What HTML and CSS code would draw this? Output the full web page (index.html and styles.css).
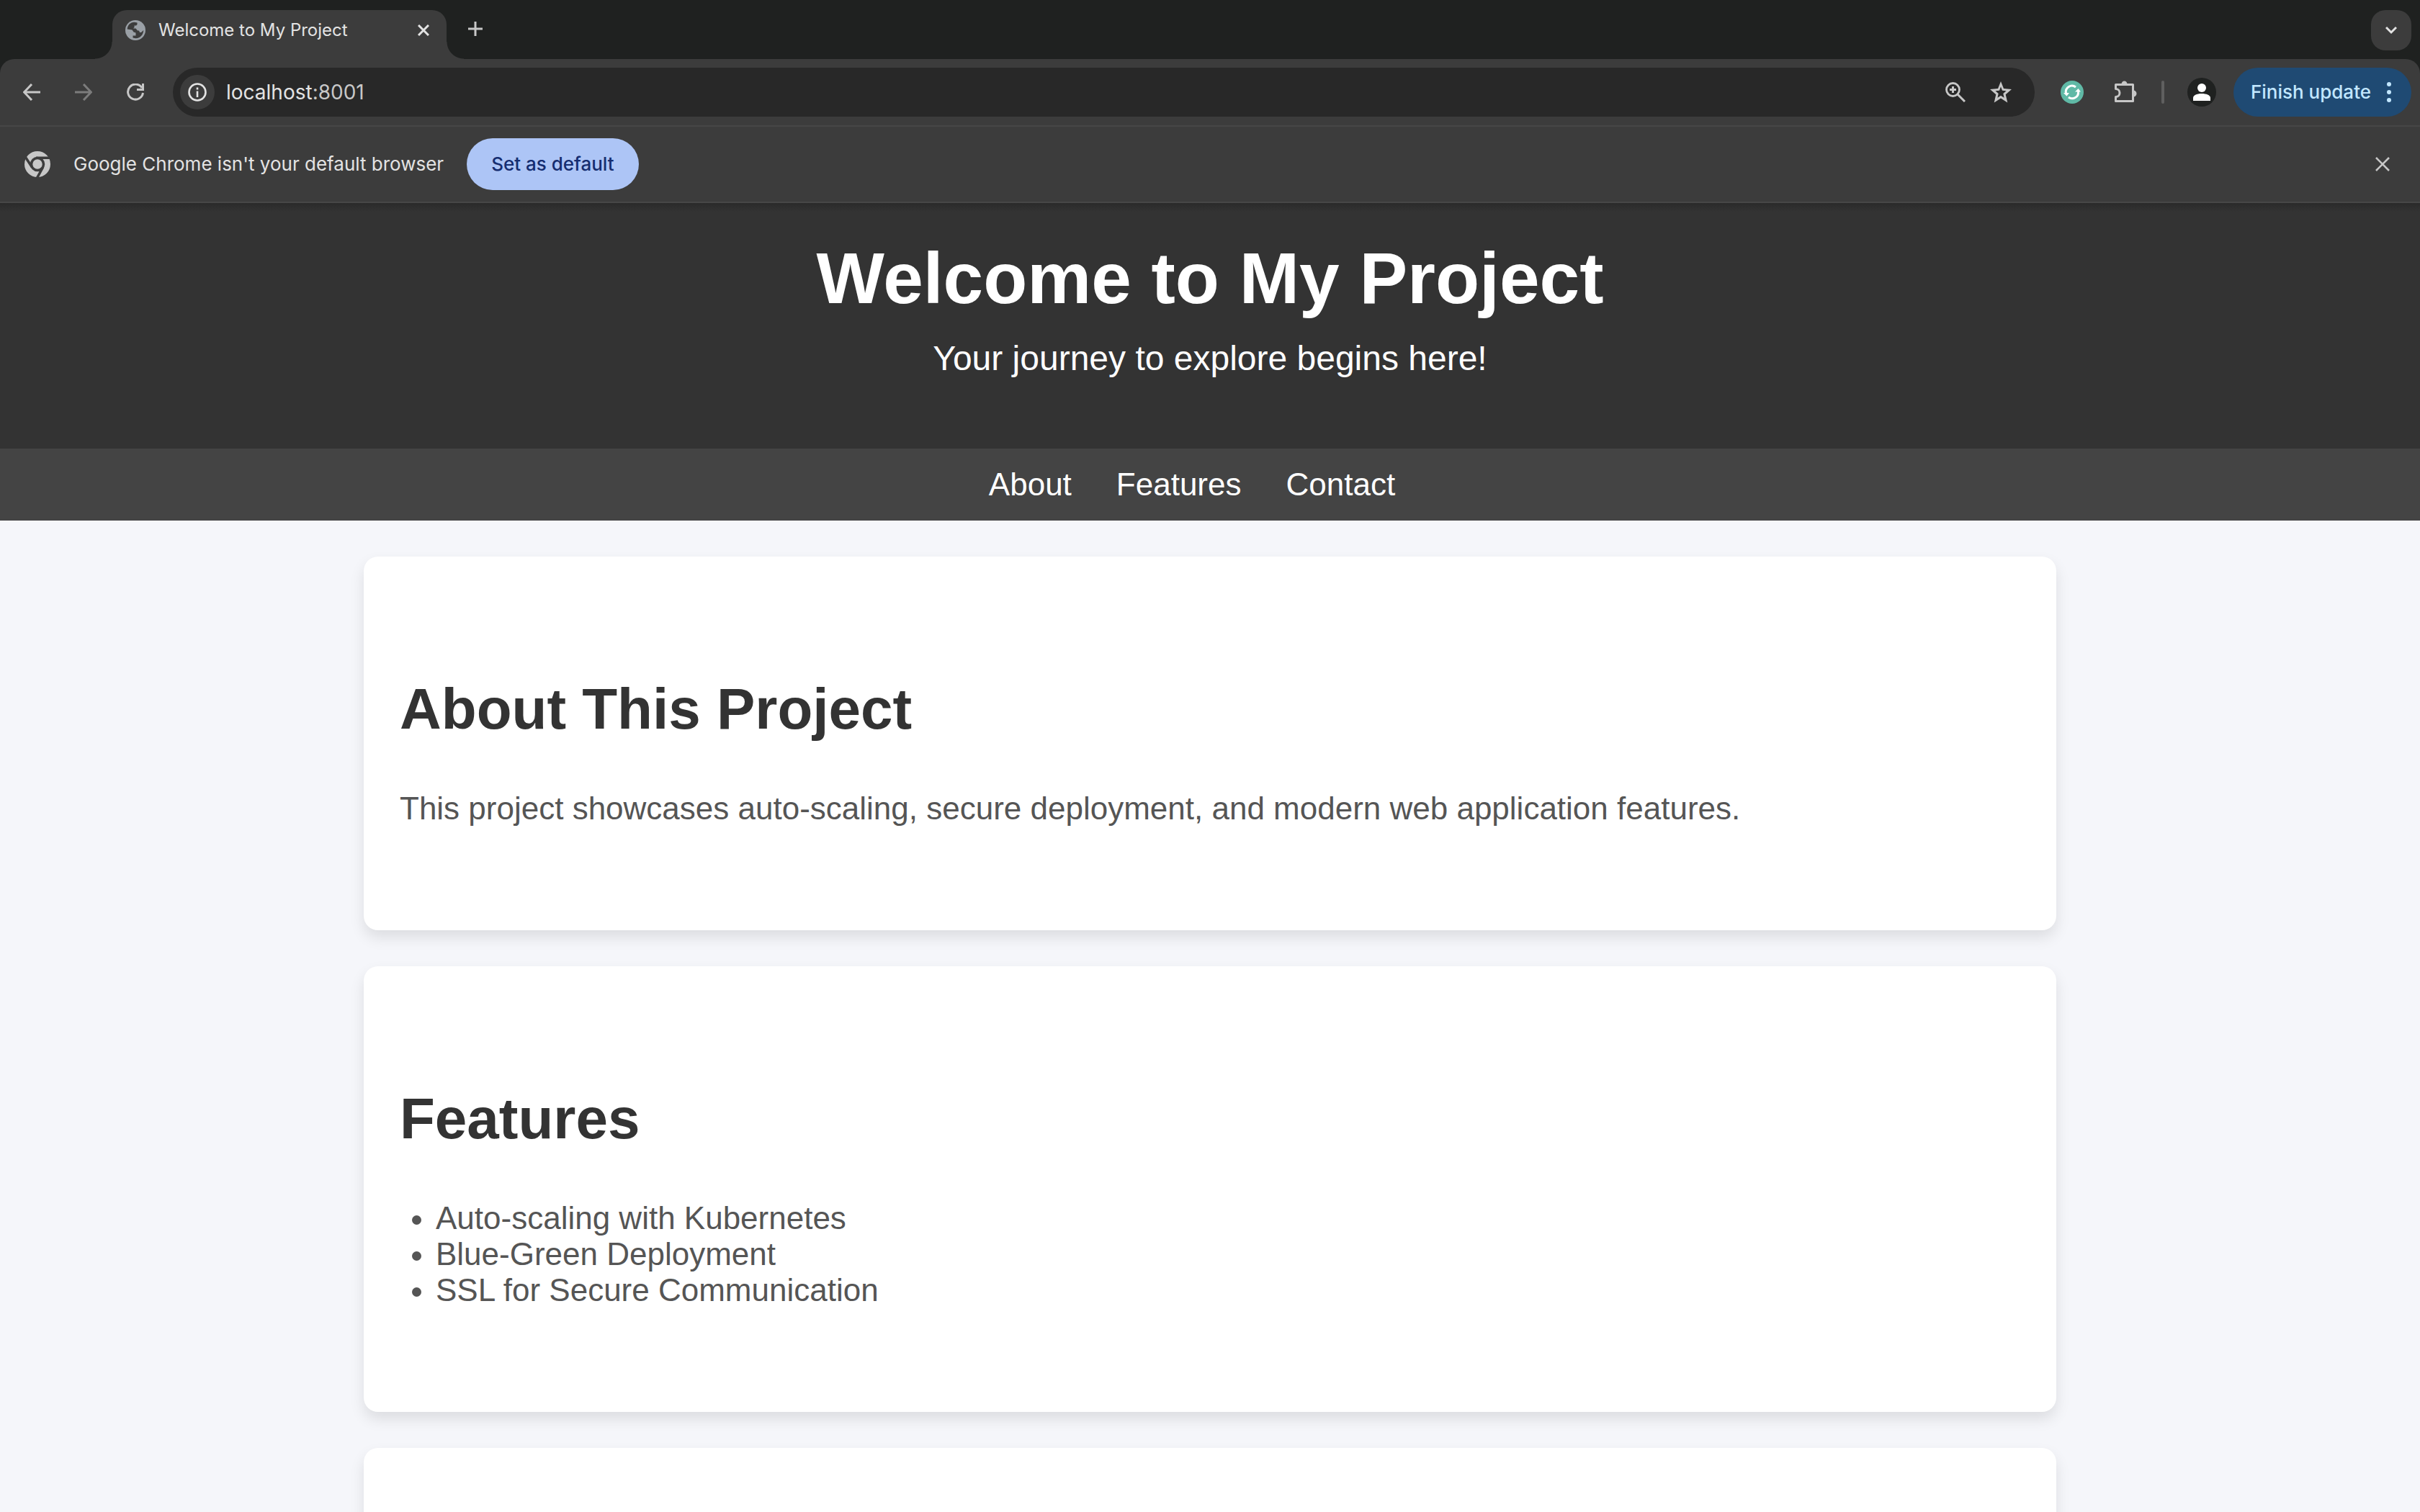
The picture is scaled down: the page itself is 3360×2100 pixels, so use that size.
FILE: index.html
```html
<!DOCTYPE html>
<html lang="en">
<head>
<meta charset="utf-8">
<title>Welcome to My Project</title>
<link rel="stylesheet" href="styles.css">
</head>
<body>
<div class="browser">
  <div class="tabstrip">
    <div class="tab">
      <svg class="icon-28" viewBox="0 0 28 28"><circle cx="14" cy="14" r="14" fill="#9aa0a6"/><path d="M2.700 12.500C3 7 7 3 12.500 2.800L16.500 3.500V6L15 7.500H12.500V10L11 11.500H14.500L17 14.500H19L20 17H22L25.300 14C25 20 21 25 14.500 25.300L10.500 24.500V21.500H14.500V17.500L11.500 16.500L9.500 13.500z" fill="#3c3c3c"/></svg>
      <span class="tab-title">Welcome to My Project</span>
      <button class="bare" aria-label="Close tab"><svg class="icon-16" viewBox="0 0 16 16"><path d="M1 1l14 14M15 1L1 15" stroke="#e3e3e3" stroke-width="3"/></svg></button>
    </div>
    <button class="bare new-tab" aria-label="New tab"><svg class="icon-20" viewBox="0 0 20 20"><path d="M10 0v20M0 10h20" stroke="#c7c7c7" stroke-width="3"/></svg></button>
    <button class="bare tab-search" aria-label="Search tabs"><svg class="icon-16" viewBox="0 0 16 16"><path d="M1 4l7 7 7-7" fill="none" stroke="#e3e3e3" stroke-width="3"/></svg></button>
  </div>
  <div class="toolbar">
    <div class="history">
      <button class="bare" aria-label="Back"><svg class="icon-24" viewBox="0 0 24 24"><path d="M24 12H2M12 1L1.500 12 12 23" fill="none" stroke="#c7c7c7" stroke-width="3"/></svg></button>
      <button class="bare" aria-label="Forward"><svg class="icon-24" viewBox="0 0 24 24"><path d="M0 12h22M12 1l10.500 11L12 23" fill="none" stroke="#7c7c7c" stroke-width="3"/></svg></button>
      <button class="bare" aria-label="Reload"><svg class="icon-24" viewBox="0 0 24 24"><path d="M22.500 13A10.500 10.500 0 1 1 21 6" fill="none" stroke="#c7c7c7" stroke-width="3"/><path d="M24 0v10H14V7h7V0z" fill="#c7c7c7"/></svg></button>
    </div>
    <div class="omnibox">
      <button class="bare site-info" aria-label="Site information"><svg class="icon-26" viewBox="0 0 26 26"><circle cx="13" cy="13" r="11.500" fill="none" stroke="#e3e3e3" stroke-width="2.600"/><path d="M13 11.500V20M13 6.500v3" stroke="#e3e3e3" stroke-width="2.600"/></svg></button>
      <div class="url">localhost<span class="port">:8001</span></div>
      <button class="bare" aria-label="Zoom"><svg class="icon-28" viewBox="0 0 28 28"><circle cx="10.500" cy="10.500" r="9" fill="none" stroke="#c7c7c7" stroke-width="2.800"/><path d="M17 17l10 10M10.500 6v9M6 10.500h9" stroke="#c7c7c7" stroke-width="3"/></svg></button>
      <button class="bare" aria-label="Bookmark"><svg class="icon-30" viewBox="0 0 30 30"><path fill-rule="evenodd" fill="#c7c7c7" d="M15 0L19 10L30 11L21.700 18.300L24.300 29.500L15 23.600L5.700 29.500L8.300 18.300L0 11L11 10zM15 7.500L13 12.700L7.500 13.300L11.700 16.900L10.400 22.700L15 19.800L19.600 22.700L18.300 16.900L22.500 13.300L17 12.700z"/></svg></button>
    </div>
    <div class="extensions">
      <button class="bare" aria-label="Grammar extension"><svg class="icon-32" viewBox="0 0 32 32"><circle cx="16" cy="16" r="16" fill="#60b9a6"/><path d="M7.500 17.500A8.500 8.500 0 0 1 21 9M24.500 15A8.500 8.500 0 0 1 11 23" fill="none" stroke="#fff" stroke-width="3"/><path d="M4 17h8l-3.500 4.500zM20 15.500h8L24.500 11z" fill="#fff"/></svg></button>
      <button class="bare" aria-label="Extensions"><svg class="icon-32" viewBox="0 0 32 32"><path d="M2.500 5.500h24v23h-24v-6a5 5 0 0 0 0-11z" fill="none" stroke="#c7c7c7" stroke-width="3" stroke-linejoin="round"/><path d="M10.500 5a4 4.500 0 0 1 8 0zM27 13.500a4.500 4.500 0 0 1 0 9z" fill="#c7c7c7"/></svg></button>
    </div>
    <span class="divider"></span>
    <button class="bare" aria-label="Profile"><svg class="icon-40" viewBox="0 0 40 40"><circle cx="20" cy="20" r="20" fill="#1f2120"/><circle cx="20" cy="14" r="6" fill="#fff"/><path d="M8 32v-4c0-4 6-6 12-6s12 2 12 6v4z" fill="#fff"/></svg></button>
    <button class="update">Finish update<svg class="dots" viewBox="0 0 6 28"><circle cx="3" cy="3" r="3"/><circle cx="3" cy="14" r="3"/><circle cx="3" cy="25" r="3"/></svg></button>
  </div>
  <div class="infobar">
    <svg class="icon-36" viewBox="0 0 36 36"><circle cx="18" cy="18" r="18" fill="#c7c7c7"/><circle cx="18" cy="18" r="8.500" fill="#c7c7c7" stroke="#3c3c3c" stroke-width="3.500"/><path d="M16 9.200h19M10.700 22.500L1.500 8.500M25.500 22.500L17.500 37" stroke="#3c3c3c" stroke-width="3.500"/></svg>
    <span class="infobar-text">Google Chrome isn't your default browser</span>
    <button class="default-button">Set as default</button>
    <button class="bare infobar-close" aria-label="Dismiss"><svg class="icon-20" viewBox="0 0 20 20"><path d="M1 1l18 18M19 1L1 19" stroke="#c7c7c7" stroke-width="2.600"/></svg></button>
  </div>
</div>
<header class="hero">
  <h1>Welcome to My Project</h1>
  <p>Your journey to explore begins here!</p>
</header>
<nav class="site-nav">
  <a href="#about">About</a>
  <a href="#features">Features</a>
  <a href="#contact">Contact</a>
</nav>
<main class="content">
  <section class="card" id="about">
    <h2>About This Project</h2>
    <p>This project showcases auto-scaling, secure deployment, and modern web application features.</p>
  </section>
  <section class="card" id="features">
    <h2>Features</h2>
    <ul>
      <li>Auto-scaling with Kubernetes</li>
      <li>Blue-Green Deployment</li>
      <li>SSL for Secure Communication</li>
    </ul>
  </section>
  <section class="card" id="contact"></section>
</main>
</body>
</html>
```
FILE: styles.css
```css
* { box-sizing: border-box; }
html { height: 100%; }
body {
  display: flex;
  flex-direction: column;
  height: 100%;
  margin: 0;
  overflow: hidden;
  background: #f5f6fa;
  color: #555;
  font-family: "Liberation Sans", Arial, sans-serif;
  font-size: 44px;
  line-height: 50px;
}
svg { display: block; flex: none; }
h1, h2, p, ul { margin: 0; }

/* Browser frame */
.browser {
  flex: none;
  background: #1f2120;
  color: #e3e3e3;
  font-family: Inter, "Liberation Sans", sans-serif;
  font-size: 26px;
  line-height: 36px;
}
.bare {
  display: flex;
  flex: none;
  align-items: center;
  justify-content: center;
  padding: 0;
  border: 0;
  background: none;
}
.icon-16 { width: 16px; height: 16px; }
.icon-20 { width: 20px; height: 20px; }
.icon-24 { width: 24px; height: 24px; }
.icon-26 { width: 26px; height: 26px; }
.icon-28 { width: 28px; height: 28px; }
.icon-30 { width: 30px; height: 30px; }
.icon-32 { width: 32px; height: 32px; }
.icon-36 { width: 36px; height: 36px; }
.icon-40 { width: 40px; height: 40px; }

.tabstrip {
  display: flex;
  height: 82px;
  padding: 14px 12px 0 156px;
}
.tab {
  position: relative;
  display: flex;
  align-items: center;
  gap: 18px;
  width: 464px;
  height: 68px;
  padding: 0 24px 12px 18px;
  border-radius: 20px 20px 0 0;
  background: #3c3c3c;
  font-size: 24px;
}
.tab::before,
.tab::after {
  content: "";
  position: absolute;
  bottom: 0;
  width: 24px;
  height: 24px;
}
.tab::before {
  right: 100%;
  background: radial-gradient(circle at 0 0, #1f2120 23px, #3c3c3c 24px);
}
.tab::after {
  left: 100%;
  background: radial-gradient(circle at 100% 0, #1f2120 23px, #3c3c3c 24px);
}
.tab-title { flex: 1; }
.new-tab { height: 52px; margin-left: 30px; }
.tab-search {
  width: 56px;
  height: 56px;
  margin-left: auto;
  border-radius: 20px;
  background: #3c3c3c;
}

.toolbar {
  display: flex;
  align-items: center;
  gap: 32px;
  height: 94px;
  padding: 0 12px 0 32px;
  border-bottom: 2px solid #474747;
  border-radius: 20px 20px 0 0;
  background: #3c3c3c;
}
.history {
  display: flex;
  gap: 48px;
  padding-right: 8px;
}
.omnibox {
  display: flex;
  flex: 1;
  align-items: center;
  gap: 34px;
  height: 68px;
  padding: 0 32px 0 10px;
  border-radius: 34px;
  background: #282828;
  font-size: 28px;
}
.site-info {
  width: 48px;
  height: 48px;
  border-radius: 24px;
  background: #3c3c3c;
}
.url { flex: 1; margin-left: -18px; }
.port { color: #c7c7c7; }
.extensions {
  display: flex;
  gap: 42px;
  padding: 0 2px 0 4px;
}
.divider {
  width: 4px;
  height: 32px;
  border-radius: 2px;
  background: #5f5f5f;
}
.update {
  display: flex;
  align-items: center;
  gap: 22px;
  height: 68px;
  margin-left: -8px;
  padding: 0 28px 0 24px;
  border: 0;
  border-radius: 34px;
  background: #1f4a73;
  color: #c2e7ff;
  font: 500 26px/36px Inter, sans-serif;
}
.dots { width: 6px; height: 28px; fill: #c2e7ff; }

.infobar {
  display: flex;
  align-items: center;
  gap: 32px;
  height: 106px;
  padding: 0 42px 0 34px;
  border-bottom: 2px solid #474747;
  background: #3c3c3c;
}
.default-button {
  height: 72px;
  padding: 0 34px;
  border: 0;
  border-radius: 36px;
  background: #adc5f6;
  color: #152d70;
  font: 500 26px/36px Inter, sans-serif;
}
.infobar-close { margin-left: auto; }

/* Page */
.hero {
  flex: none;
  padding: 48px 50px 97px;
  background: linear-gradient(#2a2a2a, #333 12px);
  color: #fff;
  text-align: center;
}
.hero h1 { font-size: 100px; line-height: 112px; }
.hero p { margin-top: 28px; font-size: 48px; line-height: 56px; }
.site-nav {
  display: flex;
  flex: none;
  justify-content: center;
  gap: 62px;
  padding: 25px 50px 25px 0;
  background: #444;
}
.site-nav a { color: #fff; text-decoration: none; }
.content {
  display: flex;
  flex: 1;
  flex-direction: column;
  gap: 50px;
  width: calc(100% - 100px);
  max-width: 2350px;
  min-height: 0;
  margin: 0 auto;
  padding-top: 50px;
}
.card {
  flex: none;
  padding: 166px 50px 144px;
  border-radius: 20px;
  background: #fff;
  box-shadow: 0 10px 20px rgba(0, 0, 0, 0.1);
}
.card h2 {
  margin-bottom: 67px;
  color: #333;
  font-size: 80px;
  line-height: 92px;
}
.card ul { padding-left: 50px; }
```
